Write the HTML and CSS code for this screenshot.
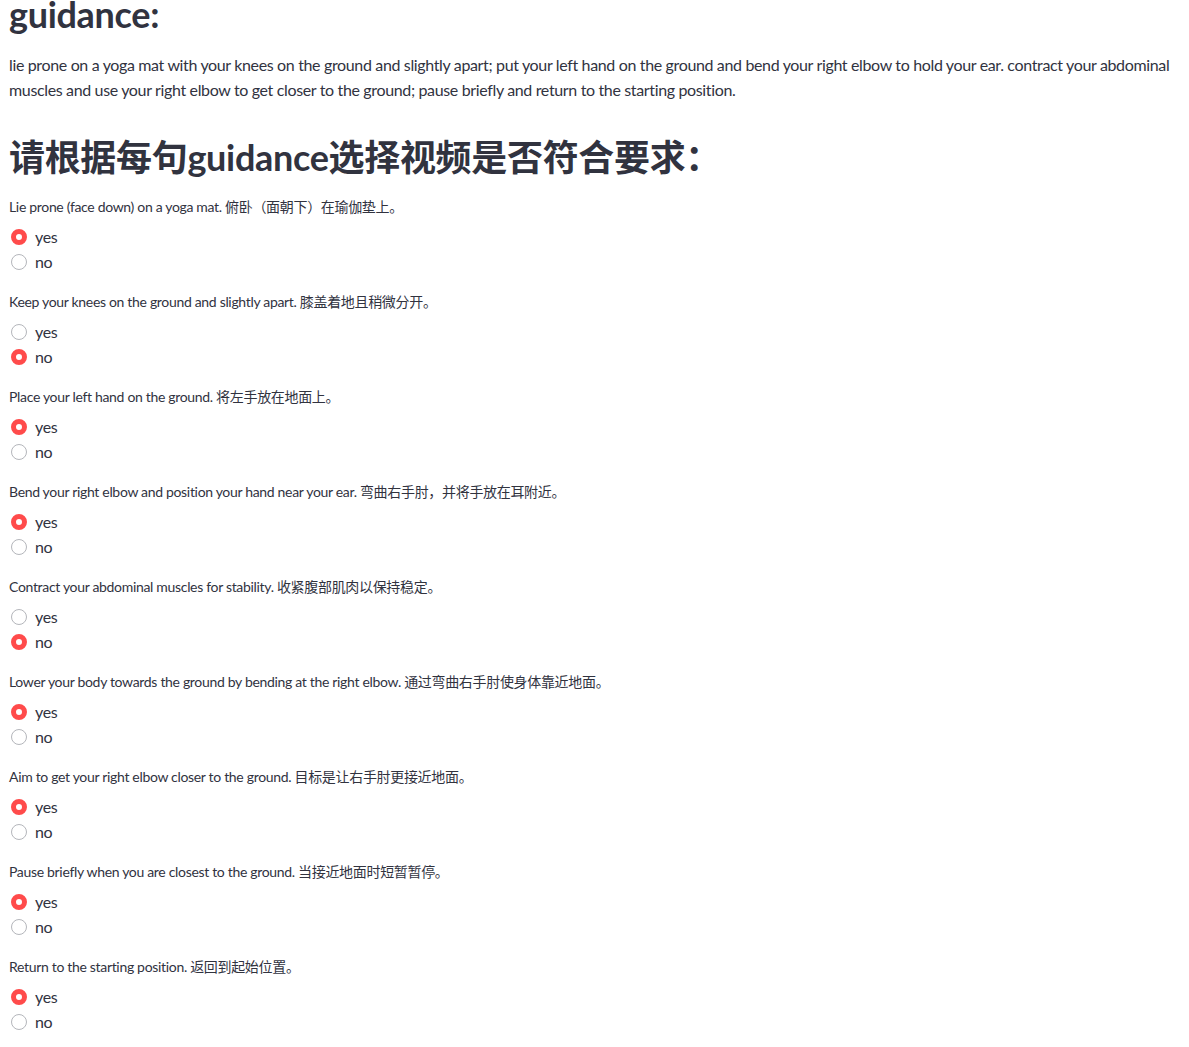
FILE: index.html
```html
<!DOCTYPE html>
<html lang="zh">
<head>
<meta charset="utf-8">
<title>guidance</title>
<link rel="stylesheet" href="styles.css">
</head>
<body>
<main class="main">
  <h2 class="heading heading-top">guidance:</h2>
  <p class="guidance-text">lie prone on a yoga mat with your knees on the ground and slightly apart; put your left hand on the ground and bend your right elbow to hold your ear. contract your abdominal muscles and use your right elbow to get closer to the ground; pause briefly and return to the starting position.</p>
  <h2 class="heading heading-q">请根据每句guidance选择视频是否符合要求：</h2>

  <div class="group">
    <div class="label">Lie prone (face down) on a yoga mat. 俯卧（面朝下）在瑜伽垫上。</div>
    <div class="options">
      <div class="option"><span class="radio checked"></span><span class="opt-text">yes</span></div>
      <div class="option"><span class="radio"></span><span class="opt-text">no</span></div>
    </div>
  </div>

  <div class="group">
    <div class="label">Keep your knees on the ground and slightly apart. 膝盖着地且稍微分开。</div>
    <div class="options">
      <div class="option"><span class="radio"></span><span class="opt-text">yes</span></div>
      <div class="option"><span class="radio checked"></span><span class="opt-text">no</span></div>
    </div>
  </div>

  <div class="group">
    <div class="label">Place your left hand on the ground. 将左手放在地面上。</div>
    <div class="options">
      <div class="option"><span class="radio checked"></span><span class="opt-text">yes</span></div>
      <div class="option"><span class="radio"></span><span class="opt-text">no</span></div>
    </div>
  </div>

  <div class="group">
    <div class="label">Bend your right elbow and position your hand near your ear. 弯曲右手肘，并将手放在耳附近。</div>
    <div class="options">
      <div class="option"><span class="radio checked"></span><span class="opt-text">yes</span></div>
      <div class="option"><span class="radio"></span><span class="opt-text">no</span></div>
    </div>
  </div>

  <div class="group">
    <div class="label">Contract your abdominal muscles for stability. 收紧腹部肌肉以保持稳定。</div>
    <div class="options">
      <div class="option"><span class="radio"></span><span class="opt-text">yes</span></div>
      <div class="option"><span class="radio checked"></span><span class="opt-text">no</span></div>
    </div>
  </div>

  <div class="group">
    <div class="label">Lower your body towards the ground by bending at the right elbow. 通过弯曲右手肘使身体靠近地面。</div>
    <div class="options">
      <div class="option"><span class="radio checked"></span><span class="opt-text">yes</span></div>
      <div class="option"><span class="radio"></span><span class="opt-text">no</span></div>
    </div>
  </div>

  <div class="group">
    <div class="label">Aim to get your right elbow closer to the ground. 目标是让右手肘更接近地面。</div>
    <div class="options">
      <div class="option"><span class="radio checked"></span><span class="opt-text">yes</span></div>
      <div class="option"><span class="radio"></span><span class="opt-text">no</span></div>
    </div>
  </div>

  <div class="group">
    <div class="label">Pause briefly when you are closest to the ground. 当接近地面时短暂暂停。</div>
    <div class="options">
      <div class="option"><span class="radio checked"></span><span class="opt-text">yes</span></div>
      <div class="option"><span class="radio"></span><span class="opt-text">no</span></div>
    </div>
  </div>

  <div class="group">
    <div class="label">Return to the starting position. 返回到起始位置。</div>
    <div class="options">
      <div class="option"><span class="radio checked"></span><span class="opt-text">yes</span></div>
      <div class="option"><span class="radio"></span><span class="opt-text">no</span></div>
    </div>
  </div>
</main>
</body>
</html>
```

FILE: styles.css
```css
html, body {
  margin: 0;
  padding: 0;
  background: #ffffff;
}

body {
  font-family: Lato, "Noto Sans CJK SC", sans-serif;
  color: #31333f;
  overflow: hidden;
  letter-spacing: -0.02em;
}

.main {
  padding: 0 9px;
  display: flex;
  flex-direction: column;
}

.heading {
  margin: 0;
  font-size: 36px;
  font-weight: 700;
  line-height: 44px;
  color: #31333f;
}

.heading-top {
  margin-top: -8px;
}

.guidance-text {
  margin: 16px 0 0;
  font-size: 16px;
  line-height: 25px;
  letter-spacing: -0.022em;
}

.heading-q {
  margin-top: 33px;
  margin-bottom: 16px;
}

.group {
  display: flex;
  flex-direction: column;
  margin-bottom: 16px;
}

.label {
  font-size: 14px;
  line-height: 24px;
  height: 24px;
  margin-bottom: 5px;
}

.options {
  display: flex;
  flex-direction: column;
}

.option {
  display: flex;
  align-items: center;
  height: 25px;
  padding-left: 2px;
}

.radio {
  box-sizing: border-box;
  width: 16px;
  height: 16px;
  border-radius: 50%;
  border: 1px solid #b4b6bb;
  background: #ffffff;
  margin-right: 8px;
  flex: none;
}

.radio.checked {
  border: 5px solid #ff4b4b;
  background: #ffffff;
}

.opt-text {
  font-size: 16px;
  line-height: 25px;
}
```
